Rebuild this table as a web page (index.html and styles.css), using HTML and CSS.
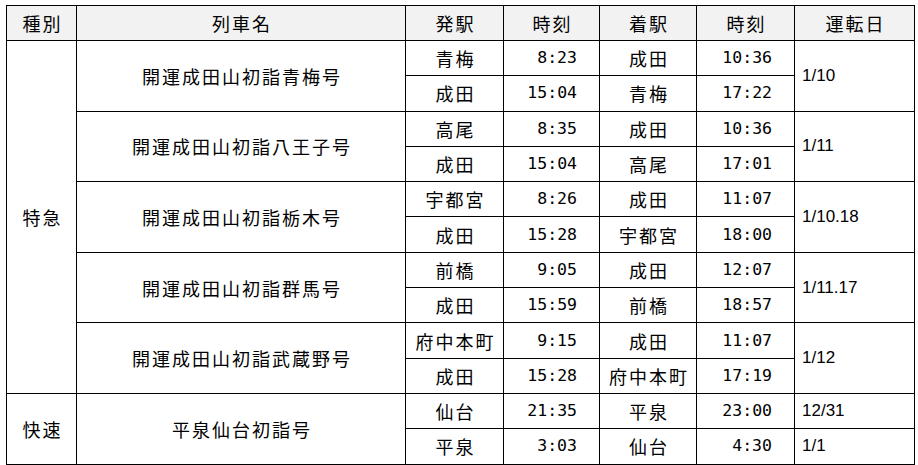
FILE: index.html
```html
<!DOCTYPE html>
<html lang="ja">
<head>
<meta charset="utf-8">
<link rel="stylesheet" href="styles.css">
</head>
<body>
<div class="wrap">
<table class="tt">
<colgroup>
<col class="c-type"><col class="c-name"><col class="c-st"><col class="c-tm"><col class="c-st2"><col class="c-tm2"><col class="c-day">
</colgroup>
<thead>
<tr><th>種別</th><th>列車名</th><th>発駅</th><th>時刻</th><th>着駅</th><th>時刻</th><th>運転日</th></tr>
</thead>
<tbody>
<tr><td class="type" rowspan="10">特急</td><td class="name" rowspan="2">開運成田山初詣青梅号</td><td class="st">青梅</td><td class="tm">8:23</td><td class="st">成田</td><td class="tm">10:36</td><td class="day" rowspan="2">1/10</td></tr>
<tr><td class="st">成田</td><td class="tm">15:04</td><td class="st">青梅</td><td class="tm">17:22</td></tr>
<tr><td class="name" rowspan="2">開運成田山初詣八王子号</td><td class="st">高尾</td><td class="tm">8:35</td><td class="st">成田</td><td class="tm">10:36</td><td class="day" rowspan="2">1/11</td></tr>
<tr><td class="st">成田</td><td class="tm">15:04</td><td class="st">高尾</td><td class="tm">17:01</td></tr>
<tr><td class="name" rowspan="2">開運成田山初詣栃木号</td><td class="st">宇都宮</td><td class="tm">8:26</td><td class="st">成田</td><td class="tm">11:07</td><td class="day" rowspan="2">1/10.18</td></tr>
<tr><td class="st">成田</td><td class="tm">15:28</td><td class="st">宇都宮</td><td class="tm">18:00</td></tr>
<tr><td class="name" rowspan="2">開運成田山初詣群馬号</td><td class="st">前橋</td><td class="tm">9:05</td><td class="st">成田</td><td class="tm">12:07</td><td class="day" rowspan="2">1/11.17</td></tr>
<tr><td class="st">成田</td><td class="tm">15:59</td><td class="st">前橋</td><td class="tm">18:57</td></tr>
<tr><td class="name" rowspan="2">開運成田山初詣武蔵野号</td><td class="st">府中本町</td><td class="tm">9:15</td><td class="st">成田</td><td class="tm">11:07</td><td class="day" rowspan="2">1/12</td></tr>
<tr><td class="st">成田</td><td class="tm">15:28</td><td class="st">府中本町</td><td class="tm">17:19</td></tr>
<tr><td class="type" rowspan="2">快速</td><td class="name" rowspan="2">平泉仙台初詣号</td><td class="st">仙台</td><td class="tm">21:35</td><td class="st">平泉</td><td class="tm">23:00</td><td class="day">12/31</td></tr>
<tr><td class="st">平泉</td><td class="tm">3:03</td><td class="st">仙台</td><td class="tm">4:30</td><td class="day">1/1</td></tr>
</tbody>
</table>
</div>
</body>
</html>
```
FILE: styles.css
```css
html, body {
  margin: 0;
  padding: 0;
  background: #fff;
}
.wrap {
  padding: 5px 0 0 6px;
}
.tt {
  border-collapse: collapse;
  table-layout: fixed;
  width: 908px;
  font-family: "Noto Sans CJK JP", "Noto Sans", sans-serif;
  font-size: 18px;
  color: #000;
}
.c-type { width: 70px; }
.c-name { width: 329px; }
.c-st { width: 98px; }
.c-tm { width: 96px; }
.c-st2 { width: 97px; }
.c-tm2 { width: 98px; }
.c-day { width: 120px; }
.tt th, .tt td {
  border: 1px solid #000;
  padding: 0;
  vertical-align: middle;
  line-height: 20px;
  white-space: nowrap;
}
.tt th {
  background: #f2f2f2;
  font-weight: normal;
  height: 34px;
  text-align: center;
  letter-spacing: 2px;
  text-indent: 2px;
}
.tt td {
  height: 34.3px;
}
.type, .name, .st {
  text-align: center;
  letter-spacing: 2px;
  text-indent: 2px;
}
.tm {
  text-align: right;
  padding-right: 22px !important;
  font-family: "DejaVu Sans Mono", monospace;
  font-size: 16.5px;
}
.day {
  text-align: left;
  padding-left: 7px !important;
  font-family: "Liberation Sans", "Noto Sans CJK JP", sans-serif;
  font-size: 17px;
}
```
